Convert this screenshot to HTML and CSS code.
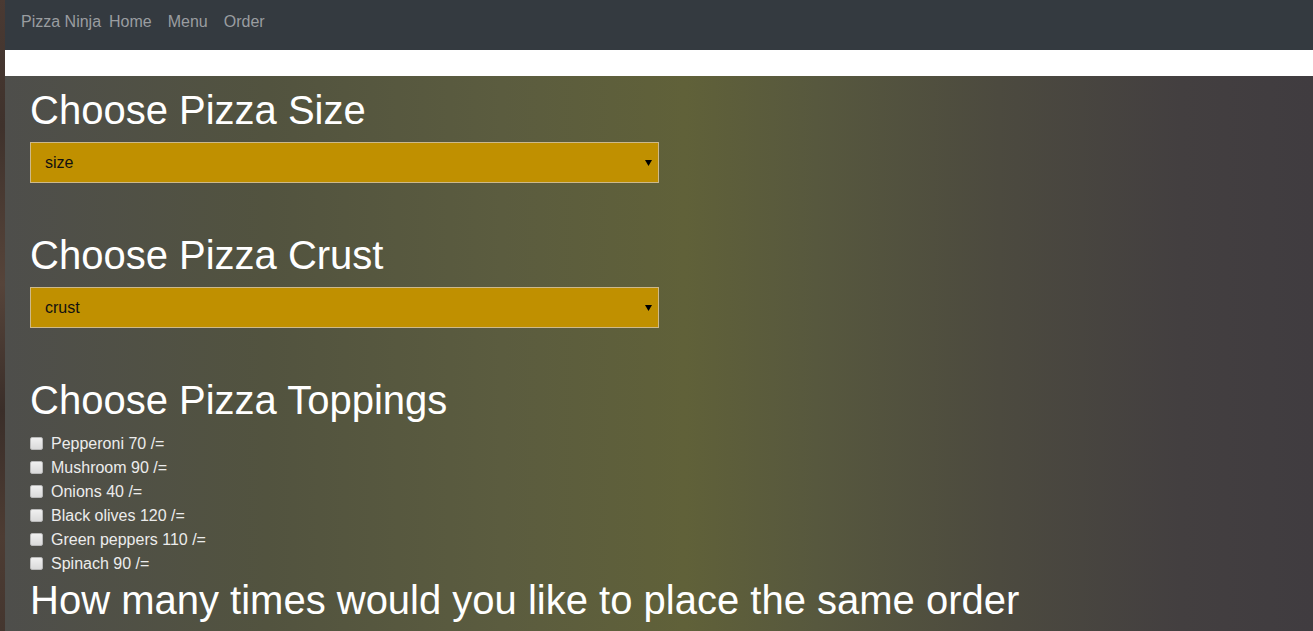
FILE: index.html
```html
<!DOCTYPE html>
<html lang="en">
<head>
<meta charset="utf-8">
<title>Pizza Ninja</title>
<link rel="stylesheet" href="styles.css">
</head>
<body>
<div class="page">
  <div class="wood"></div>
  <div class="content">
    <nav class="navbar">
      <a class="brand" href="#">Pizza Ninja</a>
      <a class="nav-link" href="#">Home</a>
      <a class="nav-link" href="#">Menu</a>
      <a class="nav-link" href="#">Order</a>
    </nav>
    <div class="strip"></div>
    <main class="order">
      <h1 class="title">Choose Pizza Size</h1>
      <select class="picker">
        <option>size</option>
        <option>Small</option>
        <option>Medium</option>
        <option>Large</option>
      </select>
      <h1 class="title">Choose Pizza Crust</h1>
      <select class="picker">
        <option>crust</option>
        <option>Crispy</option>
        <option>Stuffed</option>
        <option>Gluten-free</option>
      </select>
      <h1 class="title">Choose Pizza Toppings</h1>
      <ul class="toppings">
        <li class="topping"><label class="check"><input type="checkbox" class="box"><span>Pepperoni 70 /=</span></label></li>
        <li class="topping"><label class="check"><input type="checkbox" class="box"><span>Mushroom 90 /=</span></label></li>
        <li class="topping"><label class="check"><input type="checkbox" class="box"><span>Onions 40 /=</span></label></li>
        <li class="topping"><label class="check"><input type="checkbox" class="box"><span>Black olives 120 /=</span></label></li>
        <li class="topping"><label class="check"><input type="checkbox" class="box"><span>Green peppers 110 /=</span></label></li>
        <li class="topping"><label class="check"><input type="checkbox" class="box"><span>Spinach 90 /=</span></label></li>
      </ul>
      <h1 class="title">How many times would you like to place the same order</h1>
    </main>
  </div>
</div>
</body>
</html>
```

FILE: styles.css
```css
html, body {
  margin: 0;
  padding: 0;
  height: 100%;
  overflow: hidden;
}

body {
  font-family: "Liberation Sans", Arial, sans-serif;
  font-size: 16px;
  line-height: 1.5;
}

.page {
  display: flex;
  height: 100vh;
}

.wood {
  width: 5px;
  flex: none;
  background: linear-gradient(180deg, #4a3a33 0%, #3f322c 20%, #56443a 45%, #3a2e29 65%, #4d3c33 85%, #44362f 100%);
}

.content {
  flex: 1;
  display: flex;
  flex-direction: column;
  min-width: 0;
}

.navbar {
  flex: none;
  height: 50px;
  box-sizing: border-box;
  background: #343a40;
  display: flex;
  align-items: flex-start;
  padding: 10px 16px 0;
}

.brand,
.nav-link {
  color: #9a9da0;
  text-decoration: none;
  line-height: 24px;
  font-size: 16px;
}

.brand {
  padding-right: 0;
}

.nav-link {
  padding: 0 8px;
}

.strip {
  flex: none;
  height: 26px;
  background: #ffffff;
}

.order {
  flex: 1 0 auto;
  padding: 10px 25px 0;
  background: linear-gradient(90deg, #4e4e4b 0%, #52533f 20%, #5b5c3f 38%, #606139 52%, #57583e 62%, #4c4a3f 76%, #433f40 90%, #403c40 100%);
}

.title {
  margin: 0 0 8px;
  font-size: 40px;
  line-height: 48px;
  font-weight: 400;
  color: #ffffff;
}

.picker {
  display: block;
  width: 629px;
  height: 41px;
  margin: 0 0 48px;
  padding: 0 14px;
  box-sizing: border-box;
  border: 1px solid #cdb98a;
  border-radius: 0;
  background-color: #c09000;
  background-image: url("data:image/svg+xml;utf8,<svg xmlns='http://www.w3.org/2000/svg' width='7' height='6' viewBox='0 0 7 6'><path d='M0 0h7L3.5 6z' fill='black'/></svg>");
  background-repeat: no-repeat;
  background-position: right 6px center;
  color: #111111;
  font-family: "Liberation Sans", Arial, sans-serif;
  font-size: 16px;
  -webkit-appearance: none;
  appearance: none;
  outline: none;
}

.toppings {
  list-style: none;
  margin: 0;
  padding: 0;
}

.topping {
  height: 24px;
}

.check {
  display: flex;
  align-items: center;
  gap: 8px;
  color: #ececec;
  line-height: 24px;
  font-size: 16px;
}

.box {
  -webkit-appearance: none;
  appearance: none;
  width: 13px;
  height: 13px;
  margin: -2px 0 0;
  box-sizing: border-box;
  border: 1px solid #b9b9b9;
  border-radius: 2px;
  background: linear-gradient(180deg, #f0f0f0, #dadada);
}
```
